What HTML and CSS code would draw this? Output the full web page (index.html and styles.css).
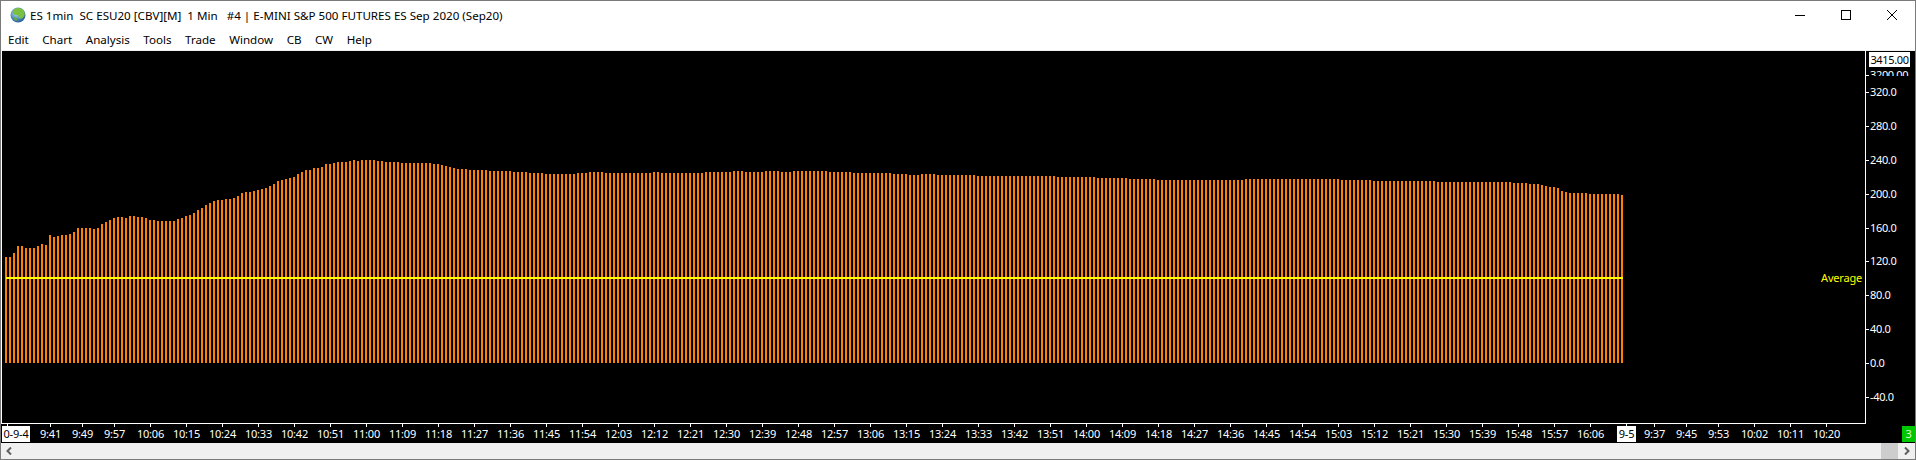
FILE: index.html
```html
<!DOCTYPE html>
<html lang="en">
<head>
  <meta charset="UTF-8">
  <title>ES 1min SC ESU20</title>
  <link rel="stylesheet" href="styles.css">
</head>
<body>
  <div class="window">
    <header class="titlebar">
      <svg class="app-icon" viewBox="0 0 16 16" width="16" height="16">
        <defs>
          <radialGradient id="globe" cx="0.4" cy="0.35" r="0.75">
            <stop offset="0" stop-color="#bfe3f5"/>
            <stop offset="0.55" stop-color="#4c8fc0"/>
            <stop offset="1" stop-color="#1d4f86"/>
          </radialGradient>
        </defs>
        <circle cx="8" cy="8" r="7.5" fill="url(#globe)"/>
        <path d="M2.500 4C5 0.500 11 0 13.500 3.500c1.500 2 1.500 4 .5 6-1 1.500-3 2.500-4 2C8 10 9 8.500 7 8 4.500 8 3 7.500 2.500 4z" fill="#7cc040"/>
        <path d="M3.500 10.500c1.500-.5 3 .5 3.500 1.500.2 1-.5 2.200-1.500 1.700-.8-.8-2-2-2-3.200z" fill="#6aa93a"/>
      </svg>
      <span class="title">ES 1min&nbsp; SC ESU20 [CBV][M]&nbsp; 1 Min &nbsp; #4 | E-MINI S&amp;P 500 FUTURES ES Sep 2020 (Sep20)</span>
      <div class="controls">
        <svg class="ctl" viewBox="0 0 10 10" width="10" height="10"><path d="M0 5.500h10" stroke="#000"/></svg>
        <svg class="ctl" viewBox="0 0 10 10" width="10" height="10"><rect x="0.500" y="0.500" width="9" height="9" fill="none" stroke="#000"/></svg>
        <svg class="ctl" viewBox="0 0 10 10" width="10" height="10"><path d="M0 0l10 10M10 0L0 10" stroke="#000"/></svg>
      </div>
    </header>

    <nav class="menubar">
      <a>Edit</a>
      <a>Chart</a>
      <a>Analysis</a>
      <a>Tools</a>
      <a>Trade</a>
      <a>Window</a>
      <a>CB</a>
      <a>CW</a>
      <a>Help</a>
    </nav>

    <main class="chart-area">
      <div class="plot">
        <svg id="bars" class="bars" width="1863" height="370"></svg>
        <span class="study-label">Average</span>
      </div>
      <div class="y-axis">
        <div class="last-price">3415.00</div>
        <div class="clipped-label"><span>3200.00</span></div>
        <div class="y-row">320.0</div>
        <div class="y-row">280.0</div>
        <div class="y-row">240.0</div>
        <div class="y-row">200.0</div>
        <div class="y-row">160.0</div>
        <div class="y-row">120.0</div>
        <div class="y-row">80.0</div>
        <div class="y-row">40.0</div>
        <div class="y-row">0.0</div>
        <div class="y-row">-40.0</div>
      </div>
    </main>

    <div class="time-axis">
      <div class="t t-first"><span class="date">0-9-4</span></div>
      <div class="t w32"><span>9:41</span></div>
      <div class="t w32"><span>9:49</span></div>
      <div class="t"><span>9:57</span></div>
      <div class="t"><span>10:06</span></div>
      <div class="t"><span>10:15</span></div>
      <div class="t"><span>10:24</span></div>
      <div class="t"><span>10:33</span></div>
      <div class="t"><span>10:42</span></div>
      <div class="t"><span>10:51</span></div>
      <div class="t"><span>11:00</span></div>
      <div class="t"><span>11:09</span></div>
      <div class="t"><span>11:18</span></div>
      <div class="t"><span>11:27</span></div>
      <div class="t"><span>11:36</span></div>
      <div class="t"><span>11:45</span></div>
      <div class="t"><span>11:54</span></div>
      <div class="t"><span>12:03</span></div>
      <div class="t"><span>12:12</span></div>
      <div class="t"><span>12:21</span></div>
      <div class="t"><span>12:30</span></div>
      <div class="t"><span>12:39</span></div>
      <div class="t"><span>12:48</span></div>
      <div class="t"><span>12:57</span></div>
      <div class="t"><span>13:06</span></div>
      <div class="t"><span>13:15</span></div>
      <div class="t"><span>13:24</span></div>
      <div class="t"><span>13:33</span></div>
      <div class="t"><span>13:42</span></div>
      <div class="t"><span>13:51</span></div>
      <div class="t"><span>14:00</span></div>
      <div class="t"><span>14:09</span></div>
      <div class="t"><span>14:18</span></div>
      <div class="t"><span>14:27</span></div>
      <div class="t"><span>14:36</span></div>
      <div class="t"><span>14:45</span></div>
      <div class="t"><span>14:54</span></div>
      <div class="t"><span>15:03</span></div>
      <div class="t"><span>15:12</span></div>
      <div class="t"><span>15:21</span></div>
      <div class="t"><span>15:30</span></div>
      <div class="t"><span>15:39</span></div>
      <div class="t"><span>15:48</span></div>
      <div class="t"><span>15:57</span></div>
      <div class="t"><span>16:06</span></div>
      <div class="t w28"><span class="date">9-5</span></div>
      <div class="t w32"><span>9:37</span></div>
      <div class="t w32"><span>9:45</span></div>
      <div class="t"><span>9:53</span></div>
      <div class="t"><span>10:02</span></div>
      <div class="t"><span>10:11</span></div>
      <div class="t"><span>10:20</span></div>
      <div class="badge">3</div>
    </div>

    <div class="scrollbar">
      <svg viewBox="0 0 6 8" width="6" height="8"><path d="M5 0.500L1.500 4 5 7.500" fill="none" stroke="#606060" stroke-width="2"/></svg>
      <div class="thumb"></div>
      <svg viewBox="0 0 6 8" width="6" height="8"><path d="M1 0.500L4.500 4 1 7.500" fill="none" stroke="#606060" stroke-width="2"/></svg>
    </div>
  </div>
  <script src="chart.js"></script>
</body>
</html>
```

FILE: styles.css
```css
body {
  margin: 0;
  padding: 0;
  overflow: hidden;
  background-color: #fff;
  font-family: "Noto Sans", Arial, sans-serif;
  font-size: 11.6px;
}

.window {
  height: 460px;
  box-sizing: border-box;
  border: 1px solid #7a7a7a;
  display: flex;
  flex-direction: column;
}

.titlebar {
  height: 27px;
  box-sizing: border-box;
  padding-top: 1px;
  display: flex;
  align-items: center;
  padding-left: 9px;
  color: #000;
}

.app-icon {
  margin-right: 4px;
}

.title {
  white-space: pre;
}

.controls {
  margin-left: auto;
  display: flex;
  gap: 36px;
  padding-right: 18px;
  margin-top: -1px;
}

.menubar {
  height: 22px;
  box-sizing: border-box;
  padding-top: 1px;
  display: flex;
  align-items: center;
  gap: 13.5px;
  padding-left: 7px;
  color: #000;
}

.chart-area {
  height: 373px;
  border-top: 1px solid #f0f0f0;
  display: flex;
  background-color: #000;
  font-size: 11px;
  letter-spacing: -0.2px;
}

.plot {
  position: relative;
  width: 1863px;
  border-left: 1px solid #fff;
  border-right: 1px solid #fff;
  border-bottom: 1px solid #fff;
}

.bars {
  display: block;
}

.study-label {
  position: absolute;
  right: 3px;
  top: 219px;
  color: #ff0;
  line-height: 16px;
}

.y-axis {
  flex: 1;
  color: #fff;
  overflow: hidden;
  letter-spacing: -0.35px;
}

.last-price {
  margin: 1px 0 0 3px;
  width: 41px;
  height: 15px;
  line-height: 15px;
  text-align: center;
  background-color: #fff;
  color: #000;
}

.clipped-label {
  position: relative;
  margin: 4px 0 -1px;
  height: 5px;
  overflow: hidden;
  padding-left: 4px;
  line-height: 8px;
}

.clipped-label::before {
  content: "";
  position: absolute;
  left: 0;
  bottom: 0;
  width: 3px;
  height: 1px;
  background-color: #fff;
}

.y-row {
  position: relative;
  height: 33.9px;
  line-height: 33.9px;
  padding-left: 4px;
}

.y-row::before {
  content: "";
  position: absolute;
  left: 0;
  top: 17px;
  width: 3px;
  height: 1px;
  background-color: #fff;
}

.time-axis {
  height: 19px;
  display: flex;
  background-color: #000;
  color: #fff;
  overflow: hidden;
  font-size: 11px;
  letter-spacing: -0.2px;
}

.t {
  position: relative;
  flex: none;
  width: 36px;
  height: 19px;
}

.t::before {
  content: "";
  position: absolute;
  left: 0;
  top: 0;
  width: 1px;
  height: 3px;
  background-color: #fff;
}

.t span {
  display: block;
  margin-left: -30px;
  width: 61px;
  margin-top: 2px;
  line-height: 16px;
  text-align: center;
}

.w28 {
  width: 28px;
}

.w32 {
  width: 32px;
}

.t-first {
  width: 43px;
  margin-left: 6px;
}

.t-first span {
  margin-left: -5px;
  width: 28px;
  background-color: #fff;
  color: #000;
  overflow: hidden;
}

.t .date {
  background-color: #fff;
  color: #000;
}

.w28 .date {
  margin-left: -9px;
  width: 19px;
}

.badge {
  margin-left: auto;
  margin-top: 2px;
  margin-right: 0;
  width: 13px;
  height: 16px;
  line-height: 16px;
  text-align: center;
  background-color: #00c800;
  color: #d8f5d8;
}

.scrollbar {
  flex: 1;
  display: flex;
  align-items: center;
  background-color: #f0f0f0;
  padding: 0 5px;
}

.thumb {
  margin-left: auto;
  margin-right: 6px;
  width: 17px;
  height: 16px;
  background-color: #cdcdcd;
}
```

FILE: chart.js
```js
// bar tops, in px below y=150 on the page
var tops = [107,107,103,96,96,98,98,98,96,94,95,85,87,86,85,85,84,82,78,78,78,78,79,78,74,72,70,68,67,67,68,66,66,67,67,68,70,70,71,71,71,71,71,69,68,66,65,63,60,58,55,53,51,50,50,49,49,48,46,43,42,42,41,40,39,38,36,34,31,30,29,28,27,24,22,20,20,18,18,17,14,14,13,12,12,12,11,10,11,10,10,10,10,11,11,12,12,12,12];

// the flat part, as [top, count]
var runs = [[13,8],[14,2],[15,1],[16,1],[17,1],[18,1],[19,3],[20,5],[21,6],[22,4],[23,4],[24,8],[23,3],[22,4],[23,12],[22,2],[23,11],[22,7],[21,3],[22,5],[21,4],[22,3],[21,2],
  [21,7],[22,6],[23,10],[24,4],[25,3],[24,4],[25,10],[26,20],[27,10],[28,8],[29,7],[30,18],
  [30,4],[29,24],[30,8],[31,16],[32,19],[33,4],[34,3],[35,1],[36,1],[37,2],[38,1],[41,1],[42,1],[43,5],[44,8],[45,1]];

runs.forEach(function (r) {
  for (var i = 0; i < r[1]; i++) tops.push(r[0]);
});

var svg = document.getElementById('bars');
var ns = 'http://www.w3.org/2000/svg';
var baseline = 312;

function rect(x, y, w, h, color) {
  var el = document.createElementNS(ns, 'rect');
  el.setAttribute('x', x);
  el.setAttribute('y', y);
  el.setAttribute('width', w);
  el.setAttribute('height', h);
  el.setAttribute('fill', color);
  svg.appendChild(el);
}

tops.forEach(function (top, i) {
  var y = 99 + top;
  rect(3 + 4 * i, y, 2, baseline - y, '#ff8000');
});

// the Average study line
rect(4, 226, 1617, 2, '#ffff00');
```
